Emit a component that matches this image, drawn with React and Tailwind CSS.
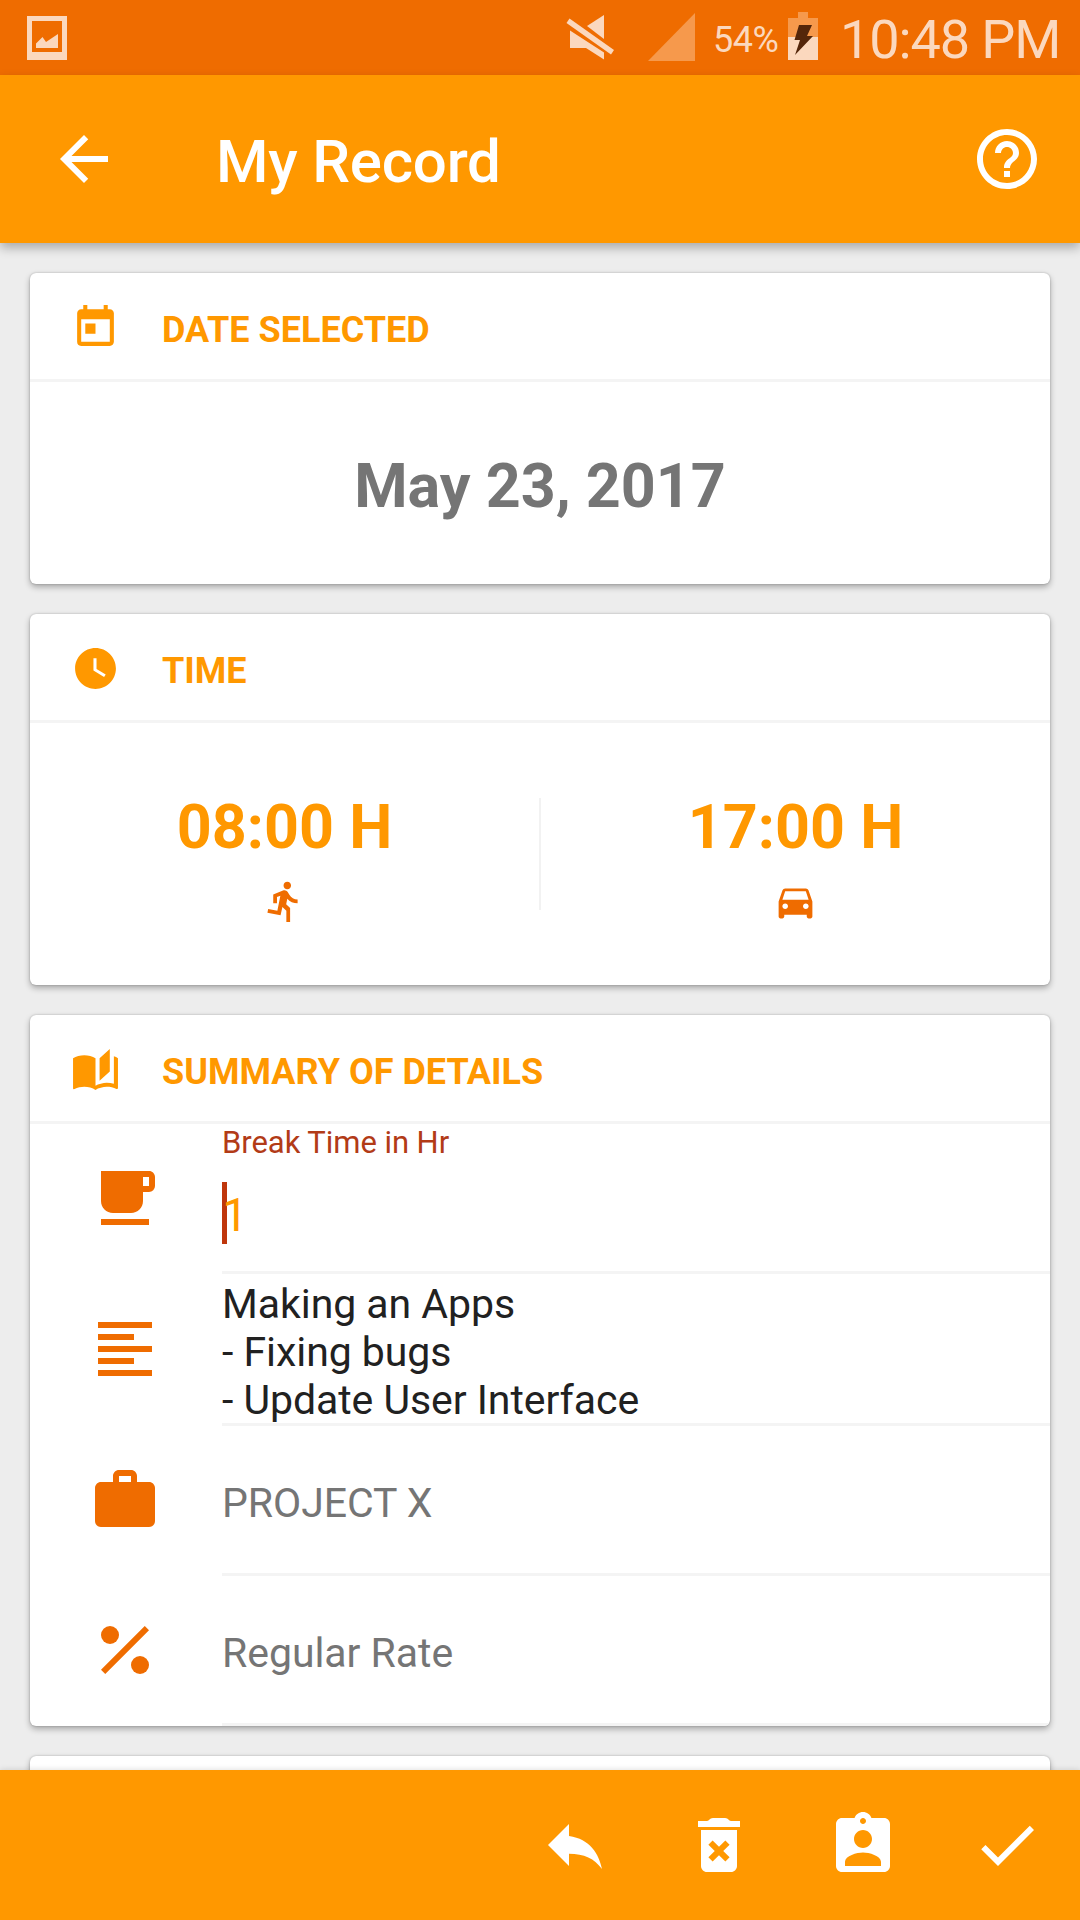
import {
  MdArrowBack,
  MdAssignmentInd,
  MdCheck,
  MdDirectionsCar,
  MdDirectionsRun,
  MdFormatAlignLeft,
  MdFreeBreakfast,
  MdHelpOutline,
  MdReply,
  MdToday,
  MdWatchLater,
  MdWork,
} from 'react-icons/md'

const BookIcon = ({ className }) => (
  <svg viewBox="0 0 24 24" fill="currentColor" className={className}>
    <path d="M19 2l-5 4.5v11l5-4.5V2zM6.5 5C4.55 5 2.45 5.4 1 6.5v14.66c0 .25.25.5.5.5.1 0 .15-.07.25-.07 1.35-.65 3.3-1.09 4.75-1.09 1.95 0 4.05.4 5.5 1.5 1.35-.85 3.8-1.5 5.5-1.5 1.65 0 3.35.31 4.75 1.06.1.05.15.03.25.03.25 0 .5-.25.5-.5V6.5c-.6-.45-1.25-.75-2-1V19c-1.1-.35-2.3-.5-3.5-.5-1.7 0-4.15.65-5.5 1.5V6.5C10.55 5.4 8.45 5 6.5 5z" />
  </svg>
)

const PercentIcon = ({ className }) => (
  <svg viewBox="0 0 24 24" fill="currentColor" className={className}>
    <circle cx="7" cy="7" r="3" />
    <circle cx="17" cy="17" r="3" />
    <path d="M20 5.41L5.41 20 4 18.59 18.59 4z" />
  </svg>
)

const TrashIcon = ({ className }) => (
  <svg viewBox="0 0 24 24" fill="currentColor" className={className}>
    <path d="M5 4h3c.8 0 .8-1 2-1h4c1.2 0 1.2 1 2 1h3v2H5z" />
    <path d="M6 19c0 1.1.9 2 2 2h8c1.1 0 2-.9 2-2V7H6v12zm2.46-7.12l1.41-1.41L12 12.59l2.12-2.12 1.41 1.41L13.41 14l2.12 2.12-1.41 1.41L12 15.41l-2.12 2.12-1.41-1.41L10.59 14l-2.13-2.12z" />
  </svg>
)

const StatusBar = () => (
  <div className="flex h-[75px] shrink-0 items-start justify-between bg-[#ef6c00] text-[#fbd8be]">
    <svg viewBox="0 0 40 44" className="mt-4 ml-[27px] h-11 w-10" fill="currentColor">
      <path fillRule="evenodd" d="M0 0h40v44H0zM5 5v31h30V5z" />
      <path d="M9 27.5l6.5-6.5L19 26l12-8v14H9z" />
    </svg>
    <div className="flex items-start">
      <svg viewBox="0 0 50 48" className="mt-[13px] h-12 w-[50px]" fill="currentColor">
        <path d="M3.5 5.5L48 37l-3 4.5L.5 10z" />
        <path d="M21 13L38 2v24z" />
        <path d="M4 17.5l34 22v7L20 35H4z" />
      </svg>
      <svg viewBox="0 0 47 48" className="mt-[13px] ml-8 h-12 w-[47px]" fill="#f6994c">
        <path d="M47 0v48H0z" />
      </svg>
      <span className="mt-[19px] ml-[18px] w-[75px] text-[36px] leading-[42px] tracking-[-0.5px]">54%</span>
      <svg viewBox="0 0 30 48" className="mt-3 h-12 w-[30px]">
        <path d="M10 0h10v6h10v19H0V6h10z" fill="#f6994c" />
        <path d="M0 25h30v23H0z" fill="currentColor" />
        <path d="M11 13h13l-5 11h6L7 43l5-15H6.5z" fill="#54260a" />
      </svg>
      <span className="mt-[8px] ml-[22px] w-[240px] text-[54px] leading-[64px] tracking-[-1.1px] whitespace-nowrap">10:48 PM</span>
    </div>
  </div>
)

const AppBar = () => (
  <header className="z-10 flex h-[168px] shrink-0 items-center bg-[#ff9800] pr-[37px] pb-px pl-12 text-white shadow-[0_5px_10px_rgba(0,0,0,0.28)]">
    <MdArrowBack className="size-[72px]" />
    <h1 className="ml-[96px] flex-1 pt-[6px] text-[60px] font-medium leading-[70px] tracking-[-0.2px]">My Record</h1>
    <MdHelpOutline className="size-[72px]" />
  </header>
)

const Card = ({ title, icon: Icon, className, children }) => (
  <section className={`mx-[30px] shrink-0 overflow-hidden rounded-md bg-white shadow-[0_3px_6px_rgba(0,0,0,0.3),0_0_2px_rgba(0,0,0,0.25)] ${className}`}>
    {title && (
      <div className="flex h-[109px] items-center border-b-[3px] border-[#f4f4f4] pt-[2px] pl-[41px] text-[#ff9800]">
        <Icon className="size-[49px]" />
        <h2 className="ml-[42px] pt-[5px] text-[36px] font-bold leading-[42px]">{title}</h2>
      </div>
    )}
    {children}
  </section>
)

const TimeSlot = ({ time, icon: Icon }) => (
  <div className="flex flex-1 flex-col items-center">
    <span className="text-[61px] font-bold leading-[70px] text-[#ff9800]">{time}</span>
    <Icon className="mt-[17px] size-[45px] text-[#ef6c00]" />
  </div>
)

const DetailRow = ({ icon: Icon, className = 'h-[150px]', textClass = 'pt-[7px]', children }) => (
  <div className={`flex ${className}`}>
    <div className="flex w-48 items-center pb-[2px] pl-[59px]">
      <Icon className="size-[72px] text-[#ef6c00]" />
    </div>
    <div className={`flex flex-1 flex-col justify-center border-b-[3px] border-[#f4f4f4] text-[41px] leading-[48px] tracking-[-0.05px] text-[#757575] ${textClass}`}>
      {children}
    </div>
  </div>
)

const BottomBar = () => (
  <nav className="z-10 flex h-[150px] shrink-0 items-center justify-end bg-[#ff9800] pr-px pb-px text-white shadow-[0_0_6px_rgba(0,0,0,0.15)]">
    {[MdReply, TrashIcon, MdAssignmentInd, MdCheck].map((Icon, i) => (
      <button key={i} className="flex w-36 justify-center">
        <Icon className="size-[72px]" />
      </button>
    ))}
  </nav>
)

export default function App() {
  return (
    <div className="flex h-[1920px] w-[1080px] flex-col overflow-hidden bg-[#ededed] font-['Roboto',sans-serif]">
      <StatusBar />
      <AppBar />
      <main className="flex min-h-0 flex-1 flex-col gap-[30px] overflow-hidden pt-[30px]">
        <Card title="DATE SELECTED" icon={MdToday} className="h-[311px]">
          <p className="pt-[69px] text-center text-[61px] font-bold leading-[70px] text-[#757575]">May 23, 2017</p>
        </Card>
        <Card title="TIME" icon={MdWatchLater} className="h-[371px]">
          <div className="flex pt-[69px]">
            <TimeSlot time="08:00 H" icon={MdDirectionsRun} />
            <div className="mt-[6px] h-[112px] w-[2px] bg-[#f2f2f2]" />
            <TimeSlot time="17:00 H" icon={MdDirectionsCar} />
          </div>
        </Card>
        <Card title="SUMMARY OF DETAILS" icon={BookIcon} className="h-[711px]">
          <DetailRow icon={MdFreeBreakfast} textClass="pt-0">
            <label className="text-[31px] leading-[36px] text-[#b23b17]">Break Time in Hr</label>
            <div className="mt-[21px] mb-[26px] flex h-[62px] items-center">
              <div className="h-[62px] w-[5px] bg-[#bf360c]" />
              <span className="-ml-[5px] pt-[4px] text-[46px] text-[#ff9800]">1</span>
            </div>
          </DetailRow>
          <DetailRow icon={MdFormatAlignLeft} className="h-[152px]">
            <p className="whitespace-pre-line text-[#212121]">{'Making an Apps\n- Fixing bugs\n- Update User Interface'}</p>
          </DetailRow>
          <DetailRow icon={MdWork}>PROJECT X</DetailRow>
          <DetailRow icon={PercentIcon}>Regular Rate</DetailRow>
        </Card>
        <Card className="h-[300px]" />
      </main>
      <BottomBar />
    </div>
  )
}
